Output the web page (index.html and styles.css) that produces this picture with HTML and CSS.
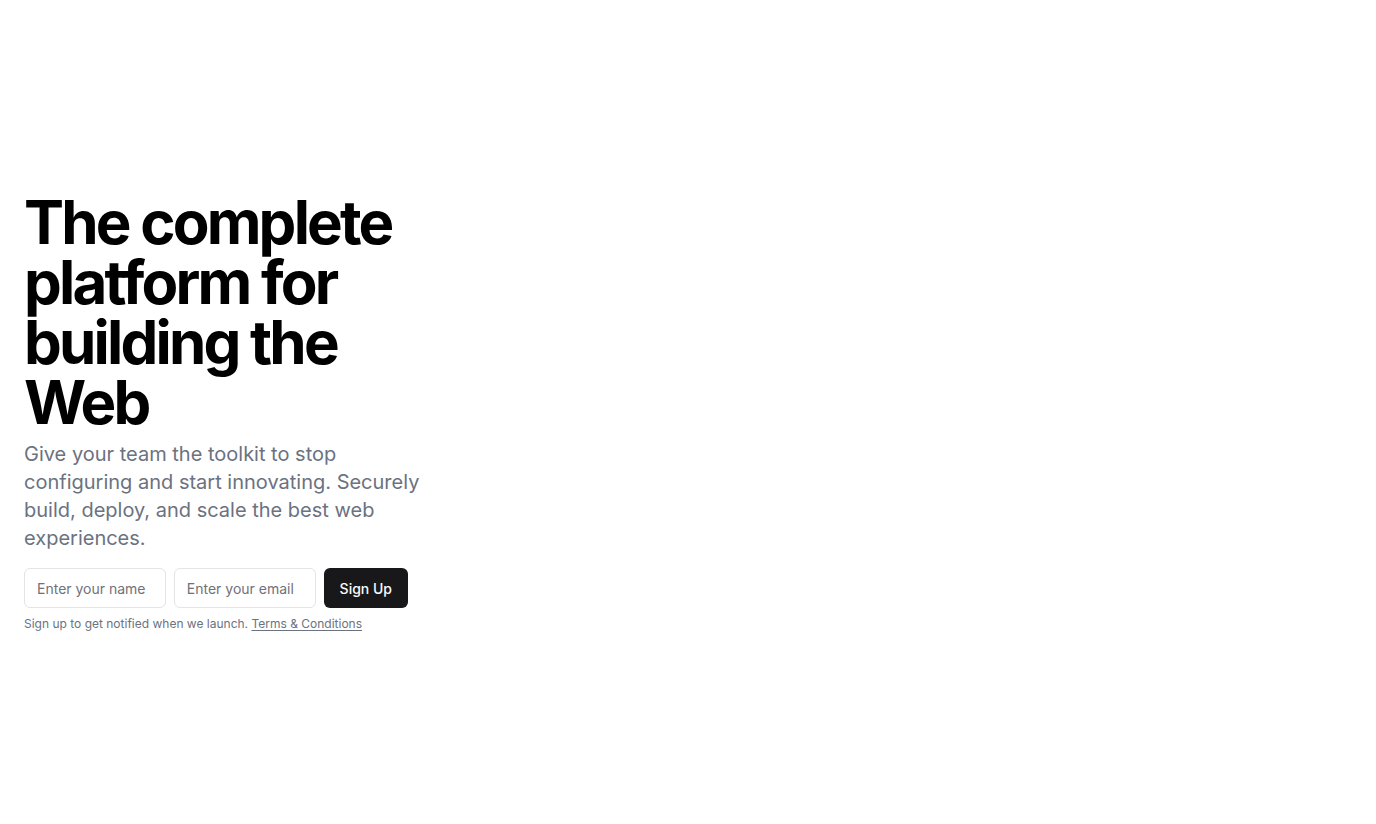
FILE: index.html
```html
<!DOCTYPE html>
<html lang="en">
<head>
<meta charset="utf-8">
<title>The complete platform for building the Web</title>
<link rel="stylesheet" href="styles.css">
</head>
<body>
<main class="hero">
  <div class="hero-inner">
    <div class="hero-text">
      <h1 class="title">The complete platform for building the Web</h1>
      <p class="lead">Give your team the toolkit to stop configuring and start innovating. Securely build, deploy, and scale the best web experiences.</p>
    </div>
    <div class="signup">
      <form class="signup-form">
        <input class="field" type="text" placeholder="Enter your name">
        <input class="field" type="email" placeholder="Enter your email">
        <button class="btn" type="submit">Sign Up</button>
      </form>
      <p class="note">Sign up to get notified when we launch. <a class="link" href="#">Terms &amp; Conditions</a></p>
    </div>
  </div>
</main>
</body>
</html>
```
FILE: styles.css
```css
* { box-sizing: border-box; }
html, body { margin: 0; padding: 0; background: #ffffff; }
body {
  font-family: Inter, "Noto Sans", "Liberation Sans", sans-serif;
  color: #09090b;
}
.hero {
  min-height: 100vh;
  display: flex;
  align-items: center;
  padding: 0 24px;
}
.hero-inner {
  display: flex;
  flex-direction: column;
  gap: 16px;
  max-width: 400px;
}
.hero-text {
  display: flex;
  flex-direction: column;
  gap: 8px;
}
.title {
  margin: 0;
  font-size: 60px;
  line-height: 60px;
  font-weight: 700;
  letter-spacing: -2.8px;
  color: #000;
}
.lead {
  margin: 0;
  font-size: 20px;
  line-height: 28px;
  color: #6b7280;
}
.signup {
  display: flex;
  flex-direction: column;
  gap: 8px;
  width: 384px;
}
.signup-form {
  display: flex;
  gap: 8px;
  margin: 0;
}
.field {
  flex: 1 1 0;
  min-width: 0;
  height: 40px;
  padding: 8px 12px;
  border: 1px solid #e4e4e7;
  border-radius: 6px;
  background: #fff;
  font-family: inherit;
  font-size: 14px;
  color: #09090b;
  outline: none;
}
.field::placeholder { color: #71717a; }
.btn {
  flex: 0 0 auto;
  height: 40px;
  padding: 0 16px;
  border: 0;
  border-radius: 6px;
  background: #18181b;
  color: #fafafa;
  font-family: inherit;
  font-size: 14px;
  font-weight: 500;
}
.note {
  margin: 0;
  font-size: 12px;
  line-height: 16px;
  color: #6b7280;
}
.link {
  color: #6b7280;
  text-decoration: underline;
  text-underline-offset: 2px;
}
```
